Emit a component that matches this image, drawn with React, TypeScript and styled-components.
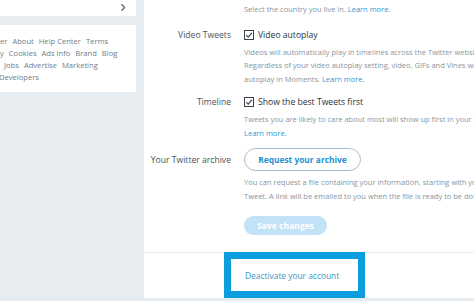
import * as React from 'react';
import styled, { createGlobalStyle } from 'styled-components';

const GlobalStyle = createGlobalStyle`
    html, body {
        margin: 0;
        padding: 0;
        background: #e6ecf0;
    }
    body {
        font-family: "Open Sans", "Liberation Sans", sans-serif;
        overflow: hidden;
    }
`;

const Page = styled.div`
    display: flex;
    align-items: flex-start;
    width: 474px;
    height: 301px;
    overflow: hidden;
`;

const LeftColumn = styled.div`
    width: 136px;
    flex-shrink: 0;
    display: flex;
    flex-direction: column;
    gap: 9px;
`;

const TopCard = styled.div`
    height: 16px;
    background: #ffffff;
    display: flex;
    justify-content: flex-end;
    align-items: flex-start;
    padding: 3px 10px 0 0;
    box-sizing: border-box;
`;

const FooterCard = styled.div`
    height: 67px;
    background: #ffffff;
    padding-top: 10px;
    box-sizing: border-box;
    overflow: hidden;
`;

const FooterLine = styled.div<{ $indent: number }>`
    white-space: nowrap;
    line-height: 12px;
    font-size: 7.6px;
    color: #717d88;
    margin-left: ${p => p.$indent}px;
`;

const FooterLink = styled.span`
    margin-right: 5px;
`;

const Main = styled.div`
    margin-left: 8px;
    width: 330px;
    height: 298px;
    flex-shrink: 0;
    background: #ffffff;
    overflow: hidden;
    display: flex;
    flex-direction: column;
`;

const Form = styled.div`
    height: 252px;
    padding-top: 3px;
    box-sizing: border-box;
    display: flex;
    flex-direction: column;
`;

const Note = styled.div`
    padding-left: 100px;
    font-size: 7.5px;
    line-height: 13.5px;
    color: #8a959f;
    white-space: nowrap;
`;

const Row = styled.div<{ $top: number }>`
    display: grid;
    grid-template-columns: 87px 300px;
    column-gap: 13px;
    align-items: start;
    margin-top: ${p => p.$top}px;
`;

const Label = styled.div<{ $pad?: number }>`
    text-align: right;
    font-size: 8.6px;
    line-height: 14px;
    color: #4a545c;
    white-space: nowrap;
    padding-top: ${p => p.$pad || 0}px;
`;

const CheckLine = styled.div`
    display: flex;
    align-items: center;
    gap: 4px;
    font-size: 8.6px;
    line-height: 14px;
    color: #2b3238;
`;

const Desc = styled.div<{ $top?: number }>`
    font-size: 7.5px;
    line-height: 13.5px;
    color: #8a959f;
    white-space: nowrap;
    margin-top: ${p => p.$top ?? 4}px;
`;

const Link = styled.span`
    color: #2b9bd6;
`;

const ArchiveButton = styled.div`
    width: 117px;
    height: 23px;
    box-sizing: border-box;
    border: 1px solid #a3bdd0;
    border-radius: 12px;
    display: flex;
    align-items: center;
    justify-content: center;
    font-size: 8.4px;
    font-weight: 700;
    color: #2590cf;
`;

const SaveButton = styled.div`
    margin-top: 13px;
    width: 83px;
    height: 19px;
    border-radius: 10px;
    background: #c2e2f8;
    color: #ffffff;
    display: flex;
    align-items: center;
    justify-content: center;
    font-size: 8.6px;
    font-weight: 700;
`;

const BottomArea = styled.div`
    border-top: 1px solid #e6ecf0;
    flex: 1;
    display: flex;
`;

const Highlight = styled.div`
    margin: -1px 0 0 80px;
    width: 141px;
    height: 46px;
    box-sizing: border-box;
    border: 7px solid #0b9ddd;
    background: #ffffff;
    display: flex;
    align-items: center;
    padding-left: 14px;
    font-size: 8.4px;
    color: #3a97c4;
    white-space: nowrap;
`;

const Chevron = () => (
    <svg width="6" height="9" viewBox="0 0 6 9">
        <path d="M1.5 1.2 L4.6 4.5 L1.5 7.8" fill="none" stroke="#5e6a75" strokeWidth="1.3" />
    </svg>
);

const CheckBox = () => (
    <svg width="10" height="10" viewBox="0 0 10 10">
        <rect x="0.5" y="0.5" width="9" height="9" fill="#fff" stroke="#3a4148" strokeWidth="1" />
        <path d="M2.2 5.2 L4.2 7.1 L7.9 2.8" fill="none" stroke="#3a4148" strokeWidth="1.1" />
    </svg>
);

export default function App() {
    return (
        <>
            <GlobalStyle />
            <Page>
                <LeftColumn>
                    <TopCard>
                        <Chevron />
                    </TopCard>
                    <FooterCard>
                        <FooterLine $indent={0}>
                            <FooterLink>er</FooterLink>
                            <FooterLink>About</FooterLink>
                            <FooterLink>Help Center</FooterLink>
                            <FooterLink>Terms</FooterLink>
                        </FooterLine>
                        <FooterLine $indent={0}>
                            <FooterLink>y</FooterLink>
                            <FooterLink>Cookies</FooterLink>
                            <FooterLink>Ads info</FooterLink>
                            <FooterLink>Brand</FooterLink>
                            <FooterLink>Blog</FooterLink>
                        </FooterLine>
                        <FooterLine $indent={4}>
                            <FooterLink>Jobs</FooterLink>
                            <FooterLink>Advertise</FooterLink>
                            <FooterLink>Marketing</FooterLink>
                        </FooterLine>
                        <FooterLine $indent={-1}>
                            <FooterLink>Developers</FooterLink>
                        </FooterLine>
                    </FooterCard>
                </LeftColumn>
                <Main>
                    <Form>
                        <Note>
                            Select the country you live in. <Link>Learn more.</Link>
                        </Note>
                        <Row $top={11}>
                            <Label>Video Tweets</Label>
                            <div>
                                <CheckLine>
                                    <CheckBox />
                                    Video autoplay
                                </CheckLine>
                                <Desc>
                                    Videos will automatically play in timelines across the Twitter website.
                                    <br />
                                    Regardless of your video autoplay setting, video, GIFs and Vines will always
                                    <br />
                                    autoplay in Moments. <Link>Learn more.</Link>
                                </Desc>
                            </div>
                        </Row>
                        <Row $top={9}>
                            <Label>Timeline</Label>
                            <div>
                                <CheckLine>
                                    <CheckBox />
                                    Show the best Tweets first
                                </CheckLine>
                                <Desc>
                                    Tweets you are likely to care about most will show up first in your timeline.
                                    <br />
                                    <Link>Learn more.</Link>
                                </Desc>
                            </div>
                        </Row>
                        <Row $top={8}>
                            <Label $pad={4.5}>Your Twitter archive</Label>
                            <div>
                                <ArchiveButton>Request your archive</ArchiveButton>
                                <Desc $top={5}>
                                    You can request a file containing your information, starting with your first
                                    <br />
                                    Tweet. A link will be emailed to you when the file is ready to be downloaded.
                                </Desc>
                                <SaveButton>Save changes</SaveButton>
                            </div>
                        </Row>
                    </Form>
                    <BottomArea>
                        <Highlight>Deactivate your account</Highlight>
                    </BottomArea>
                </Main>
            </Page>
        </>
    );
}
